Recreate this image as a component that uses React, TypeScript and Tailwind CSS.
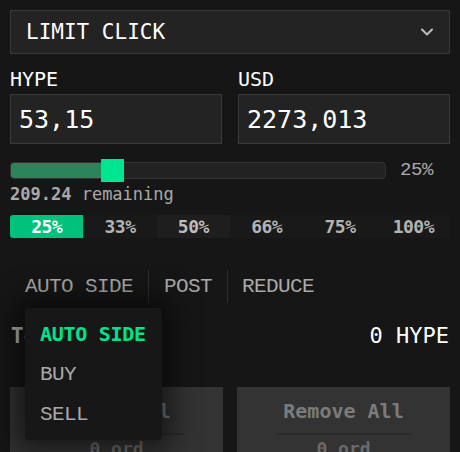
import { ChevronDown } from "lucide-react";

const presets = ["25%", "33%", "50%", "66%", "75%", "100%"];
const sides = ["AUTO SIDE", "BUY", "SELL"];

const mono = "font-['DejaVu_Sans_Mono',monospace]";
const lib = "font-['Liberation_Mono',monospace]";

function OrderButton({ label }: { label: string }) {
  return (
    <div className="flex h-[80px] flex-col items-center bg-[#333333] pt-[12px]">
      <span className={`${mono} text-[20px] font-bold leading-[24px] text-[#7b7b7b]`}>{label}</span>
      <div className="mt-[10px] h-[2px] w-[135px] bg-[#2a2a2a]" />
      <span className={`${mono} mt-[3px] text-[18px] font-bold leading-[22px] text-[#6a6a6a]`}>0 ord</span>
    </div>
  );
}

export default function App() {
  return (
    <div className="relative h-[452px] w-[460px] overflow-hidden bg-[#161616] px-[10px] pt-[10px]">
      <div className="flex h-[44px] items-center justify-between border border-[#3a3a3a] bg-[#232323] pl-[15px] pr-[12px]">
        <span className={`${mono} text-[21px] leading-none text-white`}>LIMIT CLICK</span>
        <ChevronDown size={20} strokeWidth={2.5} className="text-[#bdbdbd]" />
      </div>

      <div className="mt-[13px] grid grid-cols-2 gap-4">
        {[
          ["HYPE", "53,15"],
          ["USD", "2273,013"],
        ].map(([label, value]) => (
          <div key={label}>
            <div className={`${mono} text-[20px] leading-[24px] text-white`}>{label}</div>
            <div className="mt-[3px] flex h-[50px] items-center border border-[#3a3a3a] bg-[#232323] px-[8px]">
              <span className={`${mono} text-[25px] leading-none text-white`}>{value}</span>
            </div>
          </div>
        ))}
      </div>

      <div className="mt-[15px] flex h-[22px] items-center">
        <div className="relative h-[17px] w-[376px] rounded-[4px] border border-[#333333] bg-[#222222]">
          <div className="absolute inset-y-0 left-0 w-[91px] rounded-l-[3px] bg-[#2a855b]" />
          <div className="absolute left-[90px] top-[-4px] h-[23px] w-[23px] bg-[#00e58f]" />
        </div>
        <span className={`${lib} ml-[14px] text-[19px] leading-none tracking-[-0.4px] text-[#a9a9a9]`}>25%</span>
      </div>

      <div className={`${mono} mt-[2px] text-[17px] leading-[22px] text-[#a9a9a9]`}>
        <span className="font-bold">209.24</span> remaining
      </div>

      <div className="mt-[10px] grid h-[23px] grid-cols-6 overflow-hidden rounded-[3px] bg-[#191919]">
        {presets.map((p, i) => (
          <div
            key={p}
            className={`${mono} flex items-center justify-center text-[18px] font-bold leading-none tracking-[-0.5px] ${
              i === 0 ? "bg-[#00c27c] text-white" : i === 2 ? "bg-[#1e1e1e] text-[#bdbdbd]" : "text-[#b3b3b3]"
            }`}
          >
            {p}
          </div>
        ))}
      </div>

      <div
        className={`${lib} mt-[32px] flex h-[33px] items-center whitespace-nowrap text-[21px] leading-none tracking-[-0.6px] text-[#a9a9a9]`}
      >
        <span className="px-[15px]">AUTO SIDE</span>
        <span className="flex h-full items-center border-l border-[#2e2e2e] px-[15px]">POST</span>
        <span className="flex h-full items-center border-l border-[#2e2e2e] px-[14px]">REDUCE</span>
      </div>

      <div className="mt-[19px] flex h-[28px] items-center justify-between pl-[1px] pr-[1px]">
        <span className={`${mono} text-[21px] font-bold leading-none text-[#b5b5b5]`}>Total</span>
        <span className={`${mono} text-[22px] leading-none text-white`}>0 HYPE</span>
      </div>

      <div className="mt-[37px] grid grid-cols-2 gap-[14px]">
        <OrderButton label="Place All" />
        <OrderButton label="Remove All" />
      </div>

      <div className="absolute left-[25px] top-[308px] flex w-[137px] flex-col rounded-[4px] bg-[#171717] py-[6px] shadow-[0_0_28px_10px_rgba(0,0,0,0.55)]">
        {sides.map((s, i) => (
          <div
            key={s}
            className={`flex h-[40px] items-center whitespace-nowrap px-[15px] leading-none ${
              i === 0
                ? `${mono} text-[20px] font-bold tracking-[-0.3px] text-[#00e38d]`
                : `${lib} text-[21px] tracking-[-0.6px] text-[#a9a9a9]`
            }`}
          >
            {s}
          </div>
        ))}
      </div>
    </div>
  );
}
